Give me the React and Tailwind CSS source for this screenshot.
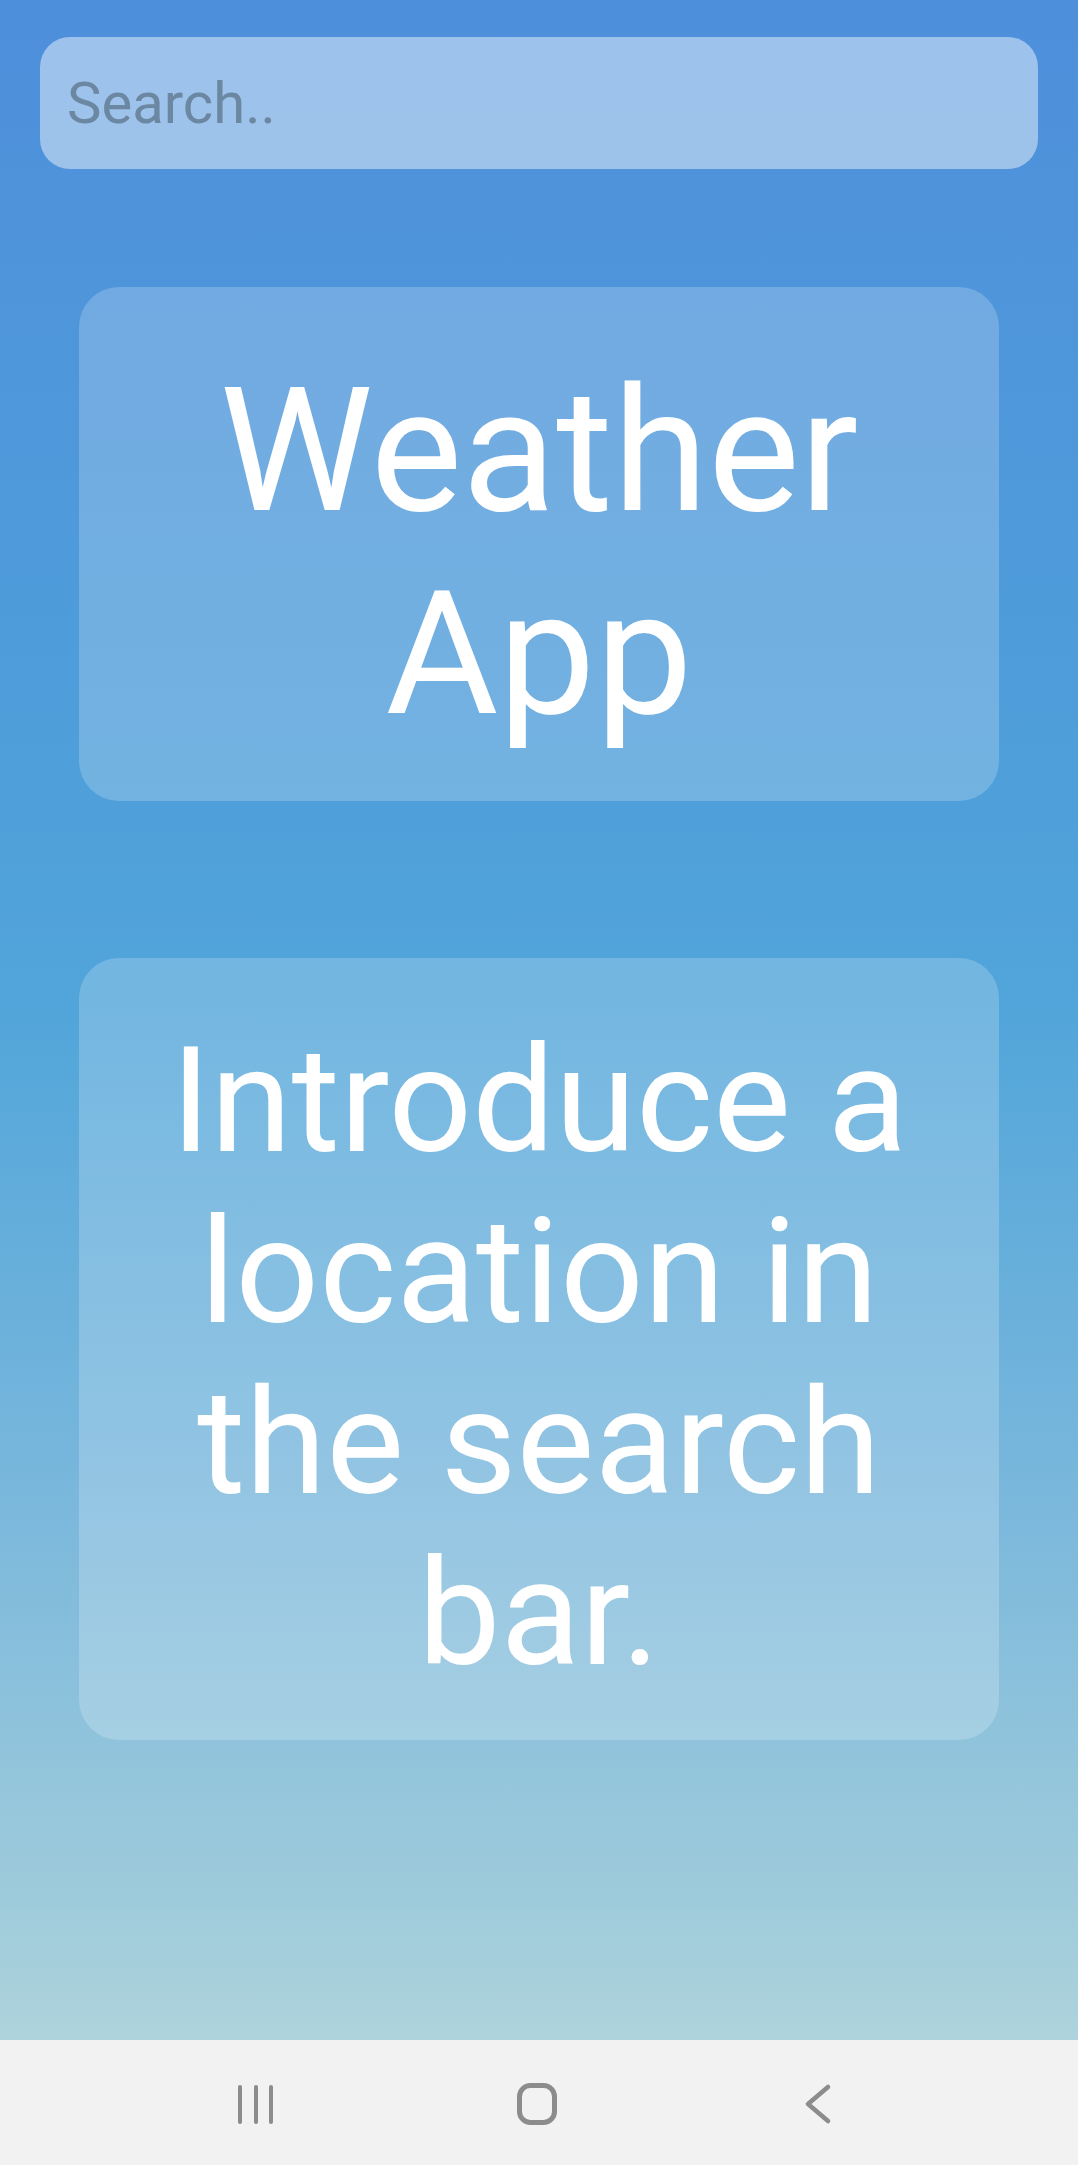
import React from "react";

export default function App() {
  return (
    <div className="w-[1078px] min-h-[2165px] flex flex-col font-['Roboto','Liberation_Sans',sans-serif]">
      <main className="h-[2040px] flex flex-col bg-[linear-gradient(180deg,#4e8fdb_0%,#4fa0da_40%,#51a5da_49%,#7bb8dc_74%,#9ecbdb_93%,#aed3dc_100%)]">
        <div className="mx-[40px] mt-[37px] h-[132px] rounded-[30px] bg-white/45 flex items-center pl-[27px] pr-[27px]">
          <input
            type="text"
            placeholder="Search.."
            className="w-full bg-transparent outline-none border-none text-[58px] leading-none text-[#5f7d99] placeholder:text-[#6b87a1] font-['Roboto','Liberation_Sans',sans-serif]"
          />
        </div>

        <section className="mx-[79px] mt-[118px] rounded-[40px] bg-white/20 pt-[63px] pb-[45px] px-[40px]">
          <h1 className="text-center text-white text-[173px] leading-[203px] font-normal">
            Weather App
          </h1>
        </section>

        <section className="mx-[79px] mt-[157px] rounded-[40px] bg-white/20 pt-[58px] pb-[40px] px-[40px]">
          <p className="text-center text-white text-[147px] leading-[171px] font-normal">
            Introduce a location in the search bar.
          </p>
        </section>
      </main>

      <nav className="h-[125px] bg-[#f2f2f2] flex items-center justify-center gap-[239px] pt-[3px] pr-[5px]">
        <svg width="42" height="42" viewBox="0 0 42 42" fill="none" stroke="#8c8c8c" strokeWidth="4" strokeLinecap="round">
          <line x1="5" y1="4" x2="5" y2="39" />
          <line x1="21" y1="4" x2="21" y2="39" />
          <line x1="36" y1="4" x2="36" y2="39" />
        </svg>
        <svg width="42" height="42" viewBox="0 0 42 42" fill="none" stroke="#8c8c8c" strokeWidth="5">
          <rect x="3.5" y="2.5" width="35" height="37" rx="11" />
        </svg>
        <svg width="42" height="42" viewBox="0 0 42 42" fill="none" stroke="#8c8c8c" strokeWidth="4.5" strokeLinecap="round" strokeLinejoin="round">
          <polyline points="31,4 11,21 31,38" />
        </svg>
      </nav>
    </div>
  );
}
